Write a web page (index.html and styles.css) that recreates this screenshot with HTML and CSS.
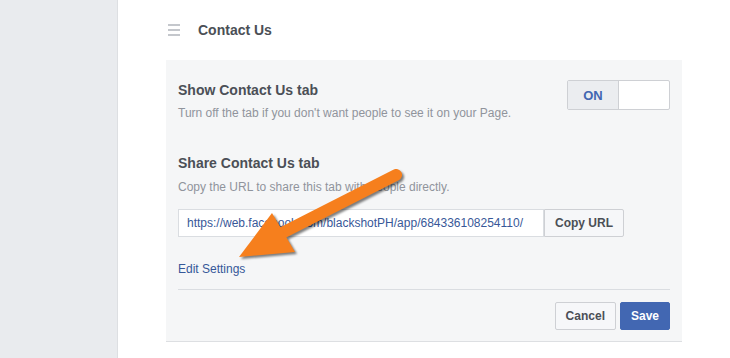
FILE: index.html
```html
<!DOCTYPE html>
<html lang="en">
<head>
    <meta charset="UTF-8">
    <meta name="viewport" content="width=device-width, initial-scale=1.0">
    <title>Contact Us tab settings</title>
    <link rel="stylesheet" href="styles.css">
</head>
<body>
    <div class="sidebar"></div>

    <div class="main">
        <div class="header">
            <span class="drag-handle"><i></i><i></i><i></i></span>
            <h2 class="header-title">Contact Us</h2>
        </div>

        <div class="panel">
            <div class="setting-row">
                <div class="setting-text">
                    <h3 class="setting-title">Show Contact Us tab</h3>
                    <p class="setting-desc">Turn off the tab if you don't want people to see it on your Page.</p>
                </div>
                <div class="toggle">
                    <span class="toggle-on">ON</span>
                    <span class="toggle-off"></span>
                </div>
            </div>

            <div class="share">
                <h3 class="setting-title">Share Contact Us tab</h3>
                <p class="setting-desc">Copy the URL to share this tab with people directly.</p>
                <div class="url-row">
                    <input class="url-input" type="text" readonly value="https://web.facebook.com/blackshotPH/app/684336108254110/">
                    <button class="btn">Copy URL</button>
                </div>
            </div>

            <a class="edit-link" href="#">Edit Settings</a>

            <div class="panel-footer">
                <button class="btn">Cancel</button>
                <button class="btn btn-primary">Save</button>
            </div>
        </div>
    </div>

    <!-- annotation arrow drawn over the screenshot -->
    <svg class="arrow" width="730" height="358" viewBox="0 0 730 358">
        <g class="arrow-shape">
            <line x1="396" y1="175" x2="282" y2="233" stroke="#f67f1d" stroke-width="12" stroke-linecap="round"/>
            <polygon points="272,213 295,252 239,257" fill="#f67f1d"/>
        </g>
    </svg>
</body>
</html>
```

FILE: styles.css
```css
/* General */
* {
    box-sizing: border-box;
    margin: 0;
    padding: 0;
}

body {
    display: flex;
    min-height: 358px;
    font-family: "Liberation Sans", Arial, sans-serif;
    font-size: 12px;
    color: #4b4f56;
    background: #fff;
}

/* Left column */
.sidebar {
    width: 118px;
    flex-shrink: 0;
    background-color: #e9ebee;
    border-right: 1px solid #dddfe2;
}

.main {
    flex: 1;
    padding-left: 48px;
}

/* Header */
.header {
    display: flex;
    align-items: center;
    padding-top: 21px;
    height: 39px;
}

.drag-handle {
    display: flex;
    flex-direction: column;
    gap: 3px;
    width: 12px;
    margin-left: 2px;
    margin-right: 18px;
}

.drag-handle i {
    display: block;
    height: 2px;
    background-color: #c4c7cc;
}

.header-title {
    font-size: 14px;
    line-height: 18px;
    font-weight: bold;
    color: #4b4f56;
}

/* Panel */
.panel {
    width: 516px;
    margin-top: 21px;
    padding: 20px 12px 11px 12px;
    background-color: #f5f6f7;
    border-bottom: 1px solid #dddfe2;
}

.setting-row {
    display: flex;
    justify-content: space-between;
    align-items: flex-start;
}

.setting-text {
    padding-top: 1px;
}

.setting-title {
    font-size: 14px;
    line-height: 18px;
    font-weight: bold;
    color: #4b4f56;
}

.setting-desc {
    margin-top: 6px;
    font-size: 12px;
    line-height: 16px;
    color: #90949c;
}

/* Toggle */
.toggle {
    display: flex;
    width: 103px;
    height: 30px;
    border: 1px solid #ced0d4;
    border-radius: 2px;
    background-color: #fff;
}

.toggle-on {
    width: 51px;
    display: flex;
    align-items: center;
    justify-content: center;
    background-color: #ebedf0;
    border-right: 1px solid #ced0d4;
    color: #4267b2;
    font-size: 13px;
    font-weight: bold;
}

.toggle-off {
    flex: 1;
}

/* Share section */
.share {
    margin-top: 33px;
}

.share .setting-desc {
    margin-top: 7px;
}

.url-row {
    display: flex;
    margin-top: 14px;
}

.url-input {
    width: 366px;
    height: 28px;
    padding: 0 8px;
    border: 1px solid #dadde1;
    background-color: #fff;
    font-family: "Liberation Sans", Arial, sans-serif;
    font-size: 12px;
    color: #385898;
    outline: none;
}

.btn {
    height: 28px;
    padding: 0 10px;
    border: 1px solid #ced0d4;
    border-radius: 2px;
    background-color: #f6f7f9;
    font-family: "Liberation Sans", Arial, sans-serif;
    font-size: 12px;
    font-weight: bold;
    color: #4b4f56;
}

.url-row .btn {
    width: 80px;
    border-radius: 0 2px 2px 0;
}

.btn-primary {
    background-color: #4267b2;
    border-color: #4267b2;
    color: #fff;
}

.edit-link {
    display: block;
    margin-top: 24px;
    line-height: 16px;
    color: #365899;
    text-decoration: none;
}

/* Footer */
.panel-footer {
    display: flex;
    justify-content: flex-end;
    gap: 4px;
    margin-top: 12px;
    padding-top: 12px;
    border-top: 1px solid #dadde1;
}

/* Arrow overlay */
.arrow {
    position: absolute;
    top: 0;
    left: 0;
    pointer-events: none;
}

.arrow-shape {
    filter: drop-shadow(2px 2px 1px rgba(0, 0, 0, 0.5));
}
```
